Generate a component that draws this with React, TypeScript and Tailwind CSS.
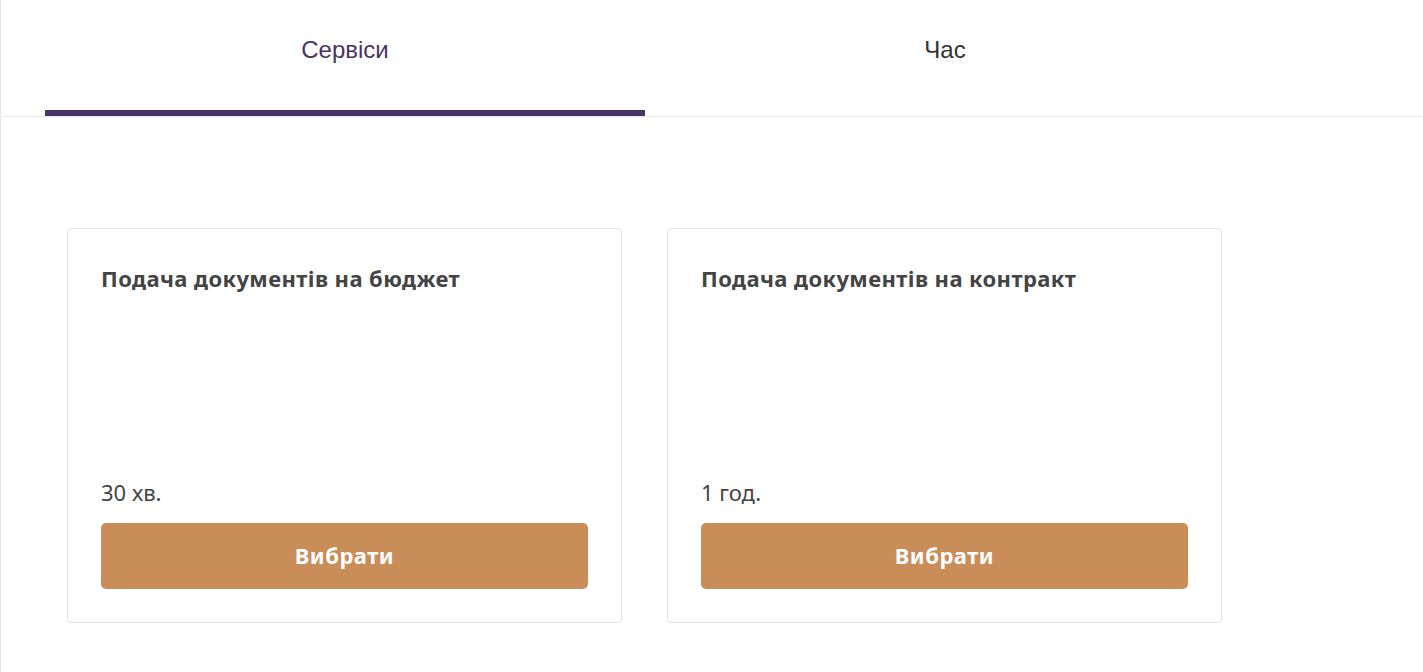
import React from "react";

const services = [
  { title: "Подача документів на бюджет", duration: "30 хв." },
  { title: "Подача документів на контракт", duration: "1 год." },
];

export default function App() {
  return (
    <div className="min-h-[672px] bg-white border-l border-[#e6e6e6]">
      <div className="flex border-b border-[#e8e8e8] pl-[44px]">
        <div className="w-[600px] h-[116px] flex flex-col">
          <div className="flex-1 flex items-start justify-center pt-[34px] text-[24px] leading-[32px] text-[#4a3366] font-['Liberation_Sans',Arial,sans-serif]">
            Сервіси
          </div>
          <div className="h-[6px] bg-[#4a3366]" />
        </div>
        <div className="w-[600px] h-[116px] flex items-start justify-center pt-[34px] text-[24px] leading-[32px] text-[#333333] font-['Liberation_Sans',Arial,sans-serif]">
          Час
        </div>
      </div>
      <div className="flex gap-[45px] pl-[66px] pt-[111px] font-['Noto_Sans',sans-serif]">
        {services.map((s) => (
          <div
            key={s.title}
            className="w-[555px] h-[395px] border border-[#e3e3e3] rounded-[4px] px-[33px] pt-[33px] pb-[33px] flex flex-col"
          >
            <div className="text-[22px] tracking-[0.4px] font-bold text-[#444444] leading-[32px]">{s.title}</div>
            <div className="flex-1" />
            <div className="text-[22px] text-[#444444] leading-[28px] mb-[17px]">{s.duration}</div>
            <button className="h-[66px] w-full rounded-[5px] bg-[#c98d5a] text-white text-[22px] leading-[28px] pb-[3px] tracking-[0.5px] font-bold">
              Вибрати
            </button>
          </div>
        ))}
      </div>
    </div>
  );
}
